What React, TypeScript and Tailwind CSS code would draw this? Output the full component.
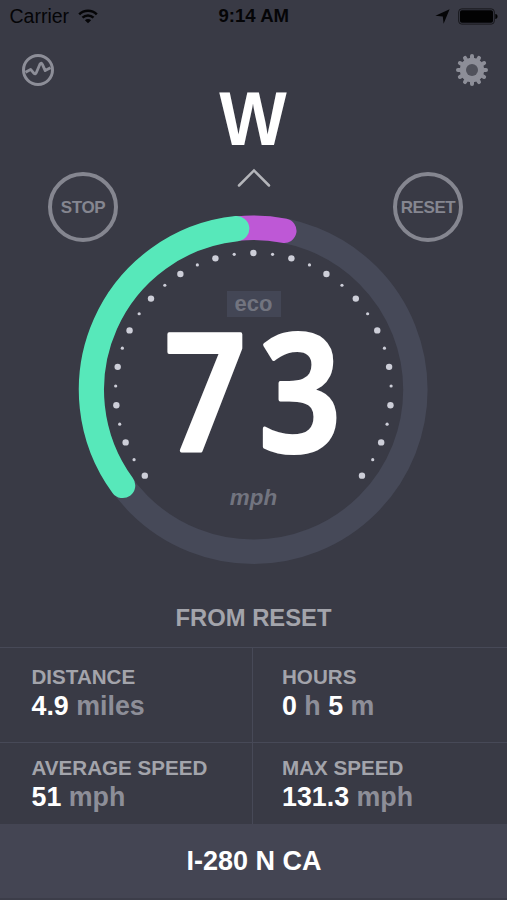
import type { ReactNode } from "react";

const SANS = "font-['Liberation_Sans',Arial,sans-serif]";

// Gauge geometry, degrees are clockwise from the top
const CX = 174.4;
const CY = 173.8;
const RING = 162;
const DOTS = 137.8;

function point(deg: number, r: number) {
  const a = (deg * Math.PI) / 180;
  return { x: CX + r * Math.sin(a), y: CY - r * Math.cos(a) };
}

function arc(from: number, to: number) {
  const a = point(from, RING);
  const b = point(to, RING);
  return `M${a.x} ${a.y}A${RING} ${RING} 0 ${to - from > 180 ? 1 : 0} 1 ${b.x} ${b.y}`;
}

const ticks = Array.from({ length: 33 }, (_, i) => (i - 16) * 8);
const teeth = Array.from({ length: 12 }, (_, i) => i * 30);

function WifiIcon() {
  return (
    <svg width="20" height="15" viewBox="0 0 20 15" fill="none" stroke="#050507">
      <path d="M1.2 5.3a12.4 12.4 0 0 1 17.6 0" strokeWidth="2.5" />
      <path d="M4.5 8.7a7.8 7.8 0 0 1 11 0" strokeWidth="2.5" />
      <path d="M10 14.3 6.9 11.2a4.4 4.4 0 0 1 6.2 0z" fill="#050507" stroke="none" />
    </svg>
  );
}

function StatusBar() {
  return (
    <div className="grid h-8 grid-cols-3 items-center pl-[9.5px] pr-[9px] text-[#050507]">
      <div className="flex items-center gap-[9px]">
        <span className="text-[19.5px] leading-8">Carrier</span>
        <WifiIcon />
      </div>
      <div className="text-center text-[18.6px] font-bold leading-8">9:14 AM</div>
      <div className="flex items-center justify-end gap-[8px]">
        <svg width="15" height="15" viewBox="0 0 15 15">
          <path d="M14.6.3.4 6.8l7.4.6.8 7.3z" fill="#050507" />
        </svg>
        <svg width="40" height="17" viewBox="0 0 40 17">
          <rect x=".7" y=".9" width="35.6" height="15.2" rx="3" fill="none" stroke="#16161a" strokeWidth="1" />
          <rect x="2" y="2.2" width="33" height="12.6" rx="1.8" fill="#020203" />
          <path d="M37.3 6c1.6.3 2.2 1.2 2.2 2.5s-.6 2.2-2.2 2.5z" fill="#020203" />
        </svg>
      </div>
    </div>
  );
}

function HistoryIcon() {
  return (
    <svg width="34" height="34" viewBox="0 0 34 34" fill="none" stroke="#8d8e98">
      <circle cx="17" cy="17" r="14.5" strokeWidth="3" />
      <path
        d="M4.5 19.2 9.6 16.4 13 20.4Q14.6 21.6 15.6 19L19 11Q20.4 9 21.4 11.4L24.2 17.6 29.5 14.8"
        strokeWidth="2.8"
        strokeLinejoin="round"
      />
    </svg>
  );
}

function GearIcon() {
  return (
    <svg width="34" height="34" viewBox="-17 -17 34 34">
      {teeth.map((deg) => (
        <line
          key={deg}
          y1="-8"
          y2="-14"
          stroke="#8d8e98"
          strokeWidth="4"
          strokeLinecap="round"
          transform={`rotate(${deg})`}
        />
      ))}
      <circle r="12.2" fill="#8d8e98" />
      <circle r="6" fill="#50515b" />
    </svg>
  );
}

function RoundButton({ children }: { children: ReactNode }) {
  return (
    <button className="flex size-[70px] items-center justify-center rounded-full border-4 border-[#858690] pt-[2px] text-[17px] font-bold tracking-[-0.4px] text-[#858690]">
      {children}
    </button>
  );
}

function Gauge() {
  return (
    <div className="relative ml-[79px] -mt-[26px] h-[348px] w-[348px]">
      <svg className="overflow-visible" width="348" height="348" viewBox="0 0 348 348" fill="none">
        <circle cx={CX} cy={CY} r={RING} stroke="#464958" strokeWidth="24.4" />
        <path d={arc(-6, 11)} stroke="#be58d6" strokeWidth="24.4" strokeLinecap="round" />
        <path d={arc(-126.2, -5.9)} stroke="#57e8ba" strokeWidth="25.2" strokeLinecap="round" />
        {ticks.map((deg, i) => {
          const p = point(deg, DOTS);
          return <circle key={deg} cx={p.x} cy={p.y + 1} r={i % 2 ? 1.6 : 3.2} fill="#cdced8" />;
        })}
        <g
          className="font-['Noto_Sans',sans-serif] text-[162px] font-semibold"
          fill="#fff"
          stroke="#fff"
          strokeWidth="4"
          strokeLinejoin="round"
        >
          <text transform="translate(85.6 235.2) scale(.88 1)">7</text>
          <text transform="translate(179.8 235.2) scale(.89 1)">3</text>
        </g>
      </svg>
      <div className="absolute inset-0 flex flex-col items-center pl-px pt-[75px]">
        <span className="h-[26px] w-[54px] bg-[#434655] text-center text-[22px] font-bold leading-[25px] text-[#72747f]">
          eco
        </span>
        <span className="mt-[167px] text-center text-[22.4px] font-bold italic leading-[28px] text-[#72747f]">
          mph
        </span>
      </div>
    </div>
  );
}

function Stat({ label, children, className = "" }: { label: string; children: ReactNode; className?: string }) {
  return (
    <div className={`border-[#474957] ${className}`}>
      <div className="text-[20.6px] leading-[24px] text-[#a3a4ab]">{label}</div>
      <div className="mt-[2px] text-[26.8px] leading-[31px] text-white">{children}</div>
    </div>
  );
}

function Unit({ children }: { children: ReactNode }) {
  return <span className="text-[#8d8e98]">{children}</span>;
}

export default function App() {
  return (
    <div className={`${SANS} flex h-[900px] w-[507px] flex-col overflow-hidden bg-[#393a45]`}>
      <StatusBar />

      <header className="flex h-[132px] items-start justify-between px-[21px]">
        <button className="mt-[21px]">
          <HistoryIcon />
        </button>
        <div className="mr-[5px] mt-[51px] scale-x-[0.94] text-[76px] font-bold leading-[72px] text-white">W</div>
        <button className="mr-[-3px] mt-[21px]">
          <GearIcon />
        </button>
      </header>

      <div className="flex h-[78px] items-start justify-between pl-[48px] pr-[44px]">
        <div className="pt-[8px]">
          <RoundButton>STOP</RoundButton>
        </div>
        <svg className="mr-[4px] mt-[3px]" width="36" height="22" viewBox="0 0 36 22" fill="none">
          <path d="M3 18.5 18 3.4l15 15.1" stroke="#b4b5ba" strokeWidth="2.5" strokeLinecap="round" />
        </svg>
        <div className="pt-[8px]">
          <RoundButton>RESET</RoundButton>
        </div>
      </div>

      <Gauge />

      <h2 className="flex h-[83px] items-center justify-center pt-[24px] text-[23.8px] font-bold text-[#a3a4ab]">
        FROM RESET
      </h2>

      <div className="grid grid-cols-[253px_254px] grid-rows-[95px_82px] font-bold">
        <Stat label="DISTANCE" className="border-r border-t pl-[31.5px] pt-[17px]">
          4.9 <Unit>miles</Unit>
        </Stat>
        <Stat label="HOURS" className="border-t pl-[29px] pt-[17px]">
          0 <Unit>h</Unit> 5 <Unit>m</Unit>
        </Stat>
        <Stat label="AVERAGE SPEED" className="border-r border-t pl-[31.5px] pt-[13px]">
          51 <Unit>mph</Unit>
        </Stat>
        <Stat label="MAX SPEED" className="border-t pl-[29px] pt-[13px]">
          131.3 <Unit>mph</Unit>
        </Stat>
      </div>

      <footer className="flex flex-1 items-center justify-center border-b-2 border-[#3c3d49] bg-[#444553] pl-px text-[27px] font-bold text-white">
        I-280 N CA
      </footer>
    </div>
  );
}
